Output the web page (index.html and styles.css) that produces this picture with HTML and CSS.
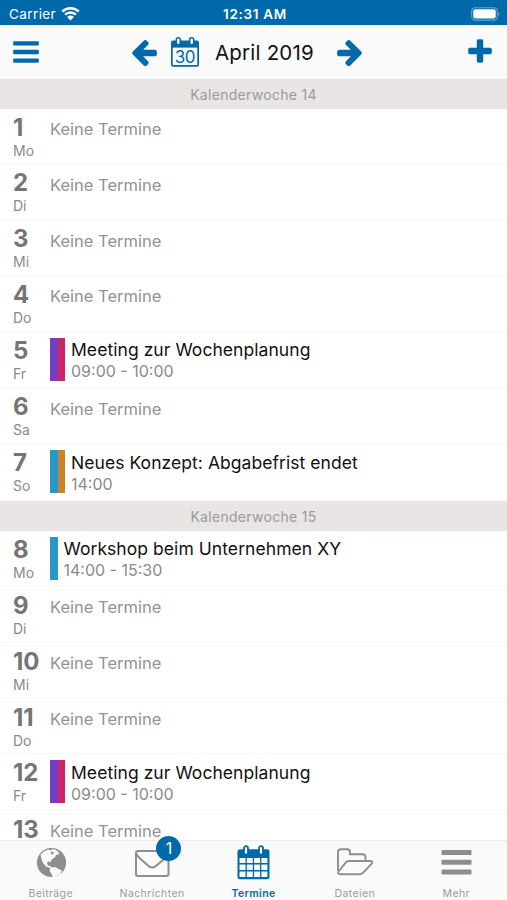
FILE: index.html
```html
<!DOCTYPE html>
<html lang="de">
<head>
<meta charset="utf-8">
<title>Termine</title>
<link rel="stylesheet" href="styles.css">
</head>
<body>
<div class="app">
  <div class="status">
    <div class="carrier"><span>Carrier</span>
      <svg class="wifi" viewBox="0 0 18 14"><path d="M1.2 5.2a11.2 11.2 0 0 1 15.6 0M3.9 8.1a7.3 7.3 0 0 1 10.2 0" fill="none" stroke="#fff" stroke-width="2.2"/><path d="M5.8 10.2a4.6 4.6 0 0 1 6.4 0L9 13.6z" fill="#fff"/></svg>
    </div>
    <div class="clock">12:31 AM</div>
    <svg class="battery" viewBox="0 0 30 14"><rect x=".7" y=".7" width="25.6" height="12.4" rx="3.6" fill="none" stroke="#69a8d3" stroke-width="1.1"/><rect x="2.3" y="2.3" width="22.4" height="9.2" rx="2" fill="#fff"/><path d="M27.5 4.8q2.2 2.1 0 4.2z" fill="#69a8d3"/></svg>
  </div>
  <header class="toolbar">
    <svg class="fa" viewBox="0 0 1792 1792"><path d="M192 1280h1408q64 0 64 64v128q0 64-64 64H192q-64 0-64-64v-128q0-64 64-64zM192 768h1408q64 0 64 64v128q0 64-64 64H192q-64 0-64-64V832q0-64 64-64zM192 256h1408q64 0 64 64v128q0 64-64 64H192q-64 0-64-64V320q0-64 64-64z"/></svg>
    <div class="month">
      <svg class="fa" viewBox="0 0 1792 1792"><path d="M1664 896v128q0 53-32.5 90.5t-84.5 37.5h-704l293 294q38 36 38 90t-38 90l-75 76q-37 37-90 37-52 0-91-37l-651-652q-37-37-37-90 0-52 37-91l651-650q38-38 91-38 52 0 90 38l75 74q38 38 38 91t-38 91l-293 293h704q52 0 84.5 37.5t32.5 90.5z"/></svg>
      <svg class="today" viewBox="0 0 28 30"><path d="M2 3.5h24q2 0 2 2v22.2q0 2-2 2H2q-2 0-2-2V5.500q0-2 2-2z"/><path d="M1.700 10.600h24.600v17.400H1.700z" fill="#fafafa"/><rect x="5.300" y=".8" width="4" height="7" rx="2" fill="#fafafa" stroke="#0069aa" stroke-width="1.500"/><rect x="18.700" y=".8" width="4" height="7" rx="2" fill="#fafafa" stroke="#0069aa" stroke-width="1.500"/><text x="13.800" y="25.500" text-anchor="middle">30</text></svg>
      <h1>April 2019</h1>
      <svg class="fa next" viewBox="0 0 1792 1792"><path d="M1600 960q0 54-37 91l-651 651q-39 37-91 37-51 0-90-37l-75-75q-38-38-38-91t38-91l293-293h-704q-52 0-84.5-37.5t-32.5-90.5v-128q0-53 32.5-90.5t84.5-37.5h704l-293-294q-38-36-38-90t38-90l75-75q38-38 90-38 53 0 91 38l651 651q37 35 37 90z"/></svg>
    </div>
    <svg class="fa" viewBox="0 0 1792 1792"><path d="M1600 736v192q0 40-28 68t-68 28h-416v416q0 40-28 68t-68 28h-192q-40 0-68-28t-28-68v-416h-416q-40 0-68-28t-28-68v-192q0-40 28-68t68-28h416v-416q0-40 28-68t68-28h192q40 0 68 28t28 68v416h416q40 0 68 28t28 68z"/></svg>
  </header>
  <main class="list">
    <div class="week">Kalenderwoche 14</div>
    <div class="day"><div class="date"><b>1</b><span>Mo</span></div><p class="none">Keine Termine</p></div>
    <div class="day"><div class="date"><b>2</b><span>Di</span></div><p class="none">Keine Termine</p></div>
    <div class="day"><div class="date"><b>3</b><span>Mi</span></div><p class="none">Keine Termine</p></div>
    <div class="day"><div class="date"><b>4</b><span>Do</span></div><p class="none">Keine Termine</p></div>
    <div class="day busy"><div class="date"><b>5</b><span>Fr</span></div><div class="tags"><i class="purple"></i><i class="pink"></i></div><div class="event"><h2>Meeting zur Wochenplanung</h2><p>09:00 - 10:00</p></div></div>
    <div class="day"><div class="date"><b>6</b><span>Sa</span></div><p class="none">Keine Termine</p></div>
    <div class="day busy"><div class="date"><b>7</b><span>So</span></div><div class="tags"><i class="blue"></i><i class="orange"></i></div><div class="event"><h2>Neues Konzept: Abgabefrist endet</h2><p>14:00</p></div></div>
    <div class="week">Kalenderwoche 15</div>
    <div class="day busy"><div class="date"><b>8</b><span>Mo</span></div><div class="tags"><i class="blue"></i></div><div class="event"><h2>Workshop beim Unternehmen XY</h2><p>14:00 - 15:30</p></div></div>
    <div class="day"><div class="date"><b>9</b><span>Di</span></div><p class="none">Keine Termine</p></div>
    <div class="day"><div class="date"><b>10</b><span>Mi</span></div><p class="none">Keine Termine</p></div>
    <div class="day"><div class="date"><b>11</b><span>Do</span></div><p class="none">Keine Termine</p></div>
    <div class="day busy"><div class="date"><b>12</b><span>Fr</span></div><div class="tags"><i class="purple"></i><i class="pink"></i></div><div class="event"><h2>Meeting zur Wochenplanung</h2><p>09:00 - 10:00</p></div></div>
    <div class="day"><div class="date"><b>13</b></div><p class="none">Keine Termine</p></div>
  </main>
  <nav class="tabs">
    <a class="tab"><svg viewBox="0 0 40 40"><circle cx="20.500" cy="21.500" r="14.600" fill="#8e8e8e"/><path d="M9.500 13.500l3.500-3 4-2 3 .8 1.500-1.300 3.500 1 3 2.500-.5 2-2.500.5-1 2.200-3 2-1.500 2.800-2.500-.5-1 1.500.8 2.500 2.200.5 1.500 1.500 3.500-.5 4.500 2.500 2.500 1-2 4-3.500 1.500-3.500 2-1.200-3.500-2-3.500.2-3-4-1.500-3-3.500-1.500-4z" fill="#fafafa"/><path d="M20.500 10.500l2.500 1-1.500 2.200-2-1.200z" fill="#8e8e8e"/></svg><span>Beiträge</span></a>
    <a class="tab"><svg viewBox="0 0 40 40"><rect x="4" y="10" width="32.500" height="25" rx="2" fill="none" stroke="#8e8e8e" stroke-width="2"/><path d="M4 12q1 3 4 5.500l8 7q4.300 4 8.600 0l8-7q3-2.500 4-5.500" fill="none" stroke="#8e8e8e" stroke-width="2"/></svg><em class="badge">1</em><span>Nachrichten</span></a>
    <a class="tab active"><svg viewBox="0 0 40 40"><rect x="4.500" y="8.300" width="32" height="30" rx="2.500" fill="#0069aa"/><path d="M6.500 17h6v5h-6zm7.300 0h6v5h-6zm7.300 0h6v5h-6zm7.300 0h6v5h-6zM6.500 23.500h6v5.500h-6zm7.300 0h6v5.500h-6zm7.300 0h6v5.500h-6zm7.300 0h6v5.500h-6zM6.500 30.500h6V36h-6zm7.300 0h6V36h-6zm7.300 0h6V36h-6zm7.300 0h6V36h-6z" fill="#fafafa"/><rect x="11" y="5.200" width="4" height="8.500" rx="2" fill="#fafafa" stroke="#0069aa" stroke-width="1.800"/><rect x="26" y="5.200" width="4" height="8.500" rx="2" fill="#fafafa" stroke="#0069aa" stroke-width="1.800"/></svg><span>Termine</span></a>
    <a class="tab"><svg viewBox="0 0 40 40"><path d="M3 30V11q0-2.800 2.800-2.800h6.400q2.800 0 2.800 2.800v2.200h12.500q3 0 3 3V20M5.500 33.200h19.500q2 0 3.500-1.800l8-8.500q2-2.700-1-2.900H14q-2 0-3.500 1.800L4 30q-2.500 3.200 1.500 3.200z" fill="none" stroke="#8e8e8e" stroke-width="1.900"/></svg><span>Dateien</span></a>
    <a class="tab"><svg viewBox="0 0 40 40"><path d="M6.500 9h28q1 0 1 1v3q0 1-1 1h-28q-1 0-1-1v-3q0-1 1-1zM6.500 18.800h28q1 0 1 1v3q0 1-1 1h-28q-1 0-1-1v-3q0-1 1-1zM6.500 28.600h28q1 0 1 1v3q0 1-1 1h-28q-1 0-1-1v-3q0-1 1-1z" fill="#8e8e8e"/></svg><span>Mehr</span></a>
  </nav>
</div>
</body>
</html>
```

FILE: styles.css
```css
* { box-sizing: border-box; margin: 0; padding: 0; }
body { font-family: Inter, "Liberation Sans", sans-serif; background: #fff; }
.app { height: 900px; display: flex; flex-direction: column; overflow: hidden; }
.status { flex: none; height: 25px; background: #0069aa; color: #fff; display: grid; grid-template-columns: 1fr auto 1fr; align-items: center; padding: 3px 6px 1px 9px; font-size: 13px; }
.carrier { display: flex; align-items: center; gap: 5px; font-size: 13.5px; letter-spacing: .4px; }
.wifi { width: 19px; height: 15px; }
.clock { font-weight: 600; letter-spacing: .7px; font-size: 13.5px; }
.battery { justify-self: end; width: 30px; height: 14px; }
.toolbar { flex: none; height: 53.5px; background: #fafafa; display: flex; align-items: center; padding: 1px 12.5px 0 10.5px; }
.fa { width: 30px; height: 30px; fill: #0069aa; flex: none; }
.month { flex: 1; display: flex; align-items: center; padding-left: 88.5px; }
.today { width: 28px; height: 30px; margin: 0 16px 0 12px; fill: #0069aa; }
.today text { font-size: 17px; letter-spacing: -.5px; }
h1 { font-size: 20.5px; letter-spacing: .2px; font-weight: 400; color: #111; white-space: nowrap; }
.next { margin-left: 21.5px; }
.list { flex: 1; min-height: 0; overflow: hidden; }
.week { height: 30px; background: #e8e5e4; color: #9a9a9a; font-size: 14px; letter-spacing: .3px; line-height: 31px; text-align: center; }
.day { height: 55.85px; border-bottom: 1px solid #f5f5f5; display: flex; padding-left: 13px; }
.busy { height: 56.4px; }
.date { width: 37px; flex: none; color: #757575; }
.date b { display: block; font-size: 24px; line-height: 29px; padding-top: 4px; font-weight: 700; }
.date span { display: block; font-size: 14px; line-height: 17px; color: #8a8a8a; }
.none { color: #929292; font-size: 16.5px; line-height: 22px; padding-top: 9.4px; }
.tags { display: flex; height: 43px; margin: 6px 6px 0 0; }
.tags i { width: 7.5px; }
.purple { background: #733dc4; }
.pink { background: #cb2768; }
.blue { background: #2799c8; }
.orange { background: #cc812b; }
.event { padding-top: 7.5px; }
.event h2 { font-size: 17.5px; letter-spacing: .06px; font-weight: 400; line-height: 22px; color: #111; white-space: nowrap; }
.event p { font-size: 16px; line-height: 20px; color: #8a8a8a; }
.tabs { flex: none; height: 60px; background: #fafafa; border-top: 1px solid #ececec; display: grid; grid-template-columns: repeat(5, 1fr); position: relative; }
.tab { position: relative; display: flex; flex-direction: column; align-items: center; color: #9a9a9a; font-size: 10.5px; letter-spacing: .4px; }
.tab svg { width: 40px; height: 40px; flex: none; }
.tab span { line-height: 14px; margin-top: 5.5px; }
.active { color: #0069aa; font-weight: 600; }
.badge { position: absolute; left: 55px; top: -5px; width: 25px; height: 25px; border-radius: 50%; background: #0069aa; color: #fff; font-style: normal; font-size: 16px; line-height: 25px; text-align: center; letter-spacing: 0; }
```
